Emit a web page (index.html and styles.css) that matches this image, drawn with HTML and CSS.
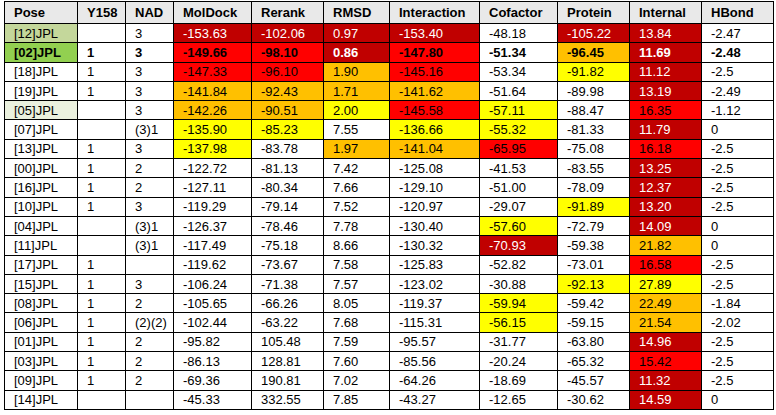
FILE: index.html
```html
<!DOCTYPE html>
<html>
<head>
<meta charset="utf-8">
<link rel="stylesheet" href="styles.css">
</head>
<body>
<table class="grid">
<colgroup>
<col class="c-pose"><col class="c-y"><col class="c-nad"><col class="c-mol"><col class="c-rer"><col class="c-rmsd"><col class="c-int"><col class="c-cof"><col class="c-pro"><col class="c-inn"><col class="c-hb">
</colgroup>
<thead>
<tr><th>Pose</th><th>Y158</th><th>NAD</th><th>MolDock</th><th>Rerank</th><th>RMSD</th><th>Interaction</th><th>Cofactor</th><th>Protein</th><th>Internal</th><th>HBond</th></tr>
</thead>
<tbody>
<tr><td class="g1">[12]JPL</td><td></td><td>3</td><td class="dr">-153.63</td><td class="dr">-102.06</td><td class="dr">0.97</td><td class="dr">-153.40</td><td>-48.18</td><td class="dr">-105.22</td><td class="dr">13.84</td><td>-2.47</td></tr>
<tr class="best"><td class="g2">[02]JPL</td><td>1</td><td>3</td><td class="r">-149.66</td><td class="r">-98.10</td><td class="dr">0.86</td><td class="r">-147.80</td><td>-51.34</td><td class="o">-96.45</td><td class="dr">11.69</td><td>-2.48</td></tr>
<tr><td>[18]JPL</td><td>1</td><td>3</td><td class="r">-147.33</td><td class="r">-96.10</td><td class="o">1.90</td><td class="r">-145.16</td><td>-53.34</td><td class="y">-91.82</td><td class="dr">11.12</td><td>-2.5</td></tr>
<tr><td>[19]JPL</td><td>1</td><td>3</td><td class="o">-141.84</td><td class="o">-92.43</td><td class="o">1.71</td><td class="o">-141.62</td><td>-51.64</td><td>-89.98</td><td class="dr">13.19</td><td>-2.49</td></tr>
<tr><td class="g3">[05]JPL</td><td></td><td>3</td><td class="o">-142.26</td><td class="o">-90.51</td><td class="y">2.00</td><td class="r">-145.58</td><td class="y">-57.11</td><td>-88.47</td><td class="r">16.35</td><td>-1.12</td></tr>
<tr><td>[07]JPL</td><td></td><td>(3)1</td><td class="y">-135.90</td><td class="y">-85.23</td><td>7.55</td><td class="y">-136.66</td><td class="y">-55.32</td><td>-81.33</td><td class="dr">11.79</td><td>0</td></tr>
<tr><td>[13]JPL</td><td>1</td><td>3</td><td class="y">-137.98</td><td>-83.78</td><td class="o">1.97</td><td class="o">-141.04</td><td class="r">-65.95</td><td>-75.08</td><td class="r">16.18</td><td>-2.5</td></tr>
<tr><td>[00]JPL</td><td>1</td><td>2</td><td>-122.72</td><td>-81.13</td><td>7.42</td><td>-125.08</td><td>-41.53</td><td>-83.55</td><td class="dr">13.25</td><td>-2.5</td></tr>
<tr><td>[16]JPL</td><td>1</td><td>2</td><td>-127.11</td><td>-80.34</td><td>7.66</td><td>-129.10</td><td>-51.00</td><td>-78.09</td><td class="dr">12.37</td><td>-2.5</td></tr>
<tr><td>[10]JPL</td><td>1</td><td>3</td><td>-119.29</td><td>-79.14</td><td>7.52</td><td>-120.97</td><td>-29.07</td><td class="y">-91.89</td><td class="dr">13.20</td><td>-2.5</td></tr>
<tr><td>[04]JPL</td><td></td><td>(3)1</td><td>-126.37</td><td>-78.46</td><td>7.78</td><td>-130.40</td><td class="y">-57.60</td><td>-72.79</td><td class="dr">14.09</td><td>0</td></tr>
<tr><td>[11]JPL</td><td></td><td>(3)1</td><td>-117.49</td><td>-75.18</td><td>8.66</td><td>-130.32</td><td class="dr">-70.93</td><td>-59.38</td><td class="o">21.82</td><td>0</td></tr>
<tr><td>[17]JPL</td><td>1</td><td></td><td>-119.62</td><td>-73.67</td><td>7.58</td><td>-125.83</td><td>-52.82</td><td>-73.01</td><td class="r">16.58</td><td>-2.5</td></tr>
<tr><td>[15]JPL</td><td>1</td><td>3</td><td>-106.24</td><td>-71.38</td><td>7.57</td><td>-123.02</td><td>-30.88</td><td class="y">-92.13</td><td class="y">27.89</td><td>-2.5</td></tr>
<tr><td>[08]JPL</td><td>1</td><td>2</td><td>-105.65</td><td>-66.26</td><td>8.05</td><td>-119.37</td><td class="y">-59.94</td><td>-59.42</td><td class="o">22.49</td><td>-1.84</td></tr>
<tr><td>[06]JPL</td><td>1</td><td>(2)(2)</td><td>-102.44</td><td>-63.22</td><td>7.68</td><td>-115.31</td><td class="y">-56.15</td><td>-59.15</td><td class="o">21.54</td><td>-2.02</td></tr>
<tr><td>[01]JPL</td><td>1</td><td>2</td><td>-95.82</td><td>105.48</td><td>7.59</td><td>-95.57</td><td>-31.77</td><td>-63.80</td><td class="dr">14.96</td><td>-2.5</td></tr>
<tr><td>[03]JPL</td><td>1</td><td>2</td><td>-86.13</td><td>128.81</td><td>7.60</td><td>-85.56</td><td>-20.24</td><td>-65.32</td><td class="r">15.42</td><td>-2.5</td></tr>
<tr><td>[09]JPL</td><td>1</td><td>2</td><td>-69.36</td><td>190.81</td><td>7.02</td><td>-64.26</td><td>-18.69</td><td>-45.57</td><td class="dr">11.32</td><td>-2.5</td></tr>
<tr><td>[14]JPL</td><td></td><td></td><td>-45.33</td><td>332.55</td><td>7.85</td><td>-43.27</td><td>-12.65</td><td>-30.62</td><td class="dr">14.59</td><td>0</td></tr>
</tbody>
</table>
</body>
</html>
```
FILE: styles.css
```css
html, body {
  margin: 0;
  padding: 0;
  background: #ffffff;
}
body {
  padding: 1px 0 0 4px;
  font-family: "Liberation Sans", Arial, sans-serif;
  font-size: 13px;
  color: #000000;
}
.grid {
  border-collapse: collapse;
  table-layout: fixed;
  width: 770px;
}
.c-pose { width: 73px; }
.c-y { width: 48px; }
.c-nad { width: 48px; }
.c-mol { width: 78px; }
.c-rer { width: 72px; }
.c-rmsd { width: 66px; }
.c-int { width: 90px; }
.c-cof { width: 78px; }
.c-pro { width: 72px; }
.c-inn { width: 72px; }
.c-hb { width: 72px; }
.grid th,
.grid td {
  border: 1px solid #000000;
  padding: 0 0 0 9px;
  text-align: left;
  vertical-align: middle;
  white-space: nowrap;
  line-height: 15px;
}
.grid thead tr { height: 22px; }
.grid th {
  background: #e9e9e9;
  font-weight: bold;
}
.grid tbody tr { height: 19.3px; }
.best td { font-weight: bold; }
.dr { background: #c00000; color: #ffffff; }
.r { background: #ff0000; }
.o { background: #ffc000; }
.y { background: #ffff00; }
.g1 { background: #c4d79b; }
.g2 { background: #92d050; }
.g3 { background: #ebf1de; }
```
